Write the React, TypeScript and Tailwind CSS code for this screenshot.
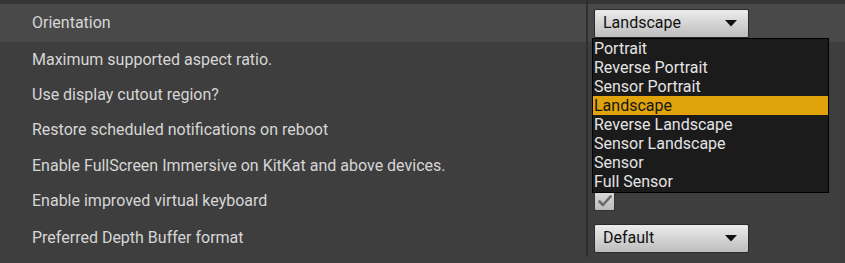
import React from "react";

const rows: { label: string; h: string; bg?: string; control?: "combo-landscape" | "check" | "combo-default" }[] = [
  { label: "Orientation", h: "h-[38px]", bg: "bg-[#494949]", control: "combo-landscape" },
  { label: "Maximum supported aspect ratio.", h: "h-[36px]" },
  { label: "Use display cutout region?", h: "h-[34px]" },
  { label: "Restore scheduled notifications on reboot", h: "h-[36px]" },
  { label: "Enable FullScreen Immersive on KitKat and above devices.", h: "h-[35px]" },
  { label: "Enable improved virtual keyboard", h: "h-[36px]", control: "check" },
  { label: "Preferred Depth Buffer format", h: "h-[38px]", control: "combo-default" },
];

const options = [
  "Portrait",
  "Reverse Portrait",
  "Sensor Portrait",
  "Landscape",
  "Reverse Landscape",
  "Sensor Landscape",
  "Sensor",
  "Full Sensor",
];

function Combo({ text }: { text: string }) {
  return (
    <div className="w-[155px] h-[29px] rounded-[2px] border border-[#2a2a2a] bg-gradient-to-b from-[#ececec] to-[#bdbdbd] flex items-center pl-[8px] pr-[11px] justify-between">
      <span className="text-[16px] text-[#111] leading-none">{text}</span>
      <svg width="12" height="7" viewBox="0 0 12 7">
        <path d="M0 0 H12 L6 6.5 Z" fill="#111" />
      </svg>
    </div>
  );
}

function Check() {
  return (
    <div className="w-[21px] h-[20px] rounded-[2px] bg-gradient-to-b from-[#d8d8d8] to-[#bcbcbc] border border-[#333] flex items-center justify-center">
      <svg width="14" height="12" viewBox="0 0 14 12">
        <path d="M1.5 6.5 L5 10 L12.5 1.5" stroke="#6b6b6b" strokeWidth="2.6" fill="none" strokeLinecap="round" strokeLinejoin="round" />
      </svg>
    </div>
  );
}

export default function App() {
  return (
    <div
      className="relative w-[845px] h-[263px] overflow-hidden bg-[#3e3e3e]"
      style={{ fontFamily: "Roboto, 'Noto Sans', sans-serif" }}
    >
      <div className="flex flex-col">
        <div className="h-[4px] flex bg-[#363636]">
          <div className="w-[586px]" />
          <div className="w-[2px] bg-[#2e2e2e]" />
        </div>
        {rows.map((r) => (
          <div key={r.label} className={`flex ${r.h} ${r.bg ?? ""}`}>
            <div className="w-[586px] flex items-center pl-[32px] text-[16px] text-[#d6d6d6]">
              {r.label}
            </div>
            <div className="w-[2px] bg-[#2e2e2e]" />
            <div className="flex-1 flex items-center pl-[6px]">
              {r.control === "combo-landscape" && <Combo text="Landscape" />}
              {r.control === "combo-default" && <Combo text="Default" />}
              {r.control === "check" && <Check />}
            </div>
          </div>
        ))}
        <div className="flex flex-1 h-[10px]">
          <div className="w-[586px]" />
          <div className="w-[2px] bg-[#2e2e2e]" />
        </div>
      </div>

      <div className="absolute left-[592px] top-[38px] w-[237px] h-[155px] bg-[#1b1b1b] border border-black flex flex-col">
        {options.map((o) => (
          <div
            key={o}
            className={`h-[19px] flex items-center pl-[1px] pt-[1px] text-[16px] leading-none ${
              o === "Landscape" ? "bg-[#e0a30b] text-[#151515]" : "text-[#e4e4e4]"
            }`}
          >
            {o}
          </div>
        ))}
      </div>
    </div>
  );
}
